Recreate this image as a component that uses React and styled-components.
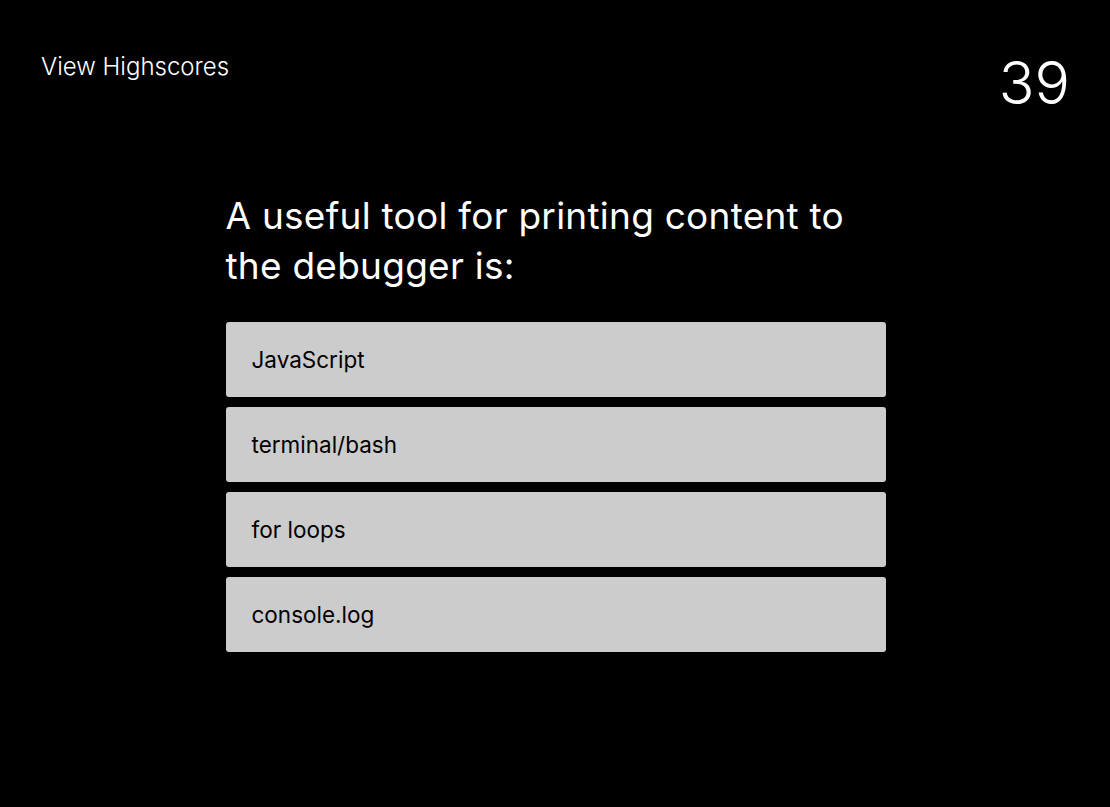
import styled, { createGlobalStyle } from "styled-components";

const GlobalStyle = createGlobalStyle`
  body {
    margin: 0;
    background: #000;
    font-family: Inter, "Noto Sans", sans-serif;
  }
`;

const answers = ["JavaScript", "terminal/bash", "for loops", "console.log"];

const App = () => {
  return (
    <>
      <GlobalStyle />
      <Page>
        <Header>
          <HighscoresLink href="#">View Highscores</HighscoresLink>
          <Timer>39</Timer>
        </Header>
        <Quiz>
          <Question>A useful tool for printing content to the debugger is:</Question>
          <AnswerList>
            {answers.map((answer) => (
              <Answer key={answer}>{answer}</Answer>
            ))}
          </AnswerList>
        </Quiz>
      </Page>
    </>
  );
};

const Page = styled.div`
  width: 100%;
  min-height: 807px;
  background: #000;
  color: #fff;
`;

const Header = styled.header`
  display: flex;
  justify-content: space-between;
  align-items: flex-start;
  height: 70px;
  padding: 48px 40px 0 41px;
`;

const HighscoresLink = styled.a`
  font-size: 24px;
  font-weight: 300;
  color: #fff;
  text-decoration: none;
  margin-top: 4px;
`;

const Timer = styled.div`
  font-size: 59px;
  font-weight: 300;
  line-height: 70px;
`;

const Quiz = styled.main`
  width: 660px;
  margin: 73px auto 0;
  padding-left: 1px;
`;

const Question = styled.h1`
  max-width: 640px;
  margin: 0 0 31px;
  font-size: 37px;
  font-weight: 400;
  letter-spacing: 0.25px;
  line-height: 50px;
`;

const AnswerList = styled.div`
  display: flex;
  flex-direction: column;
  gap: 10px;
`;

const Answer = styled.button`
  display: flex;
  align-items: center;
  height: 75px;
  padding: 0 26px;
  border: none;
  border-radius: 3px;
  background: #cccccc;
  color: #000;
  font-family: Inter, "Noto Sans", sans-serif;
  font-size: 22.5px;
  text-align: left;
  cursor: pointer;
`;

export default App;
